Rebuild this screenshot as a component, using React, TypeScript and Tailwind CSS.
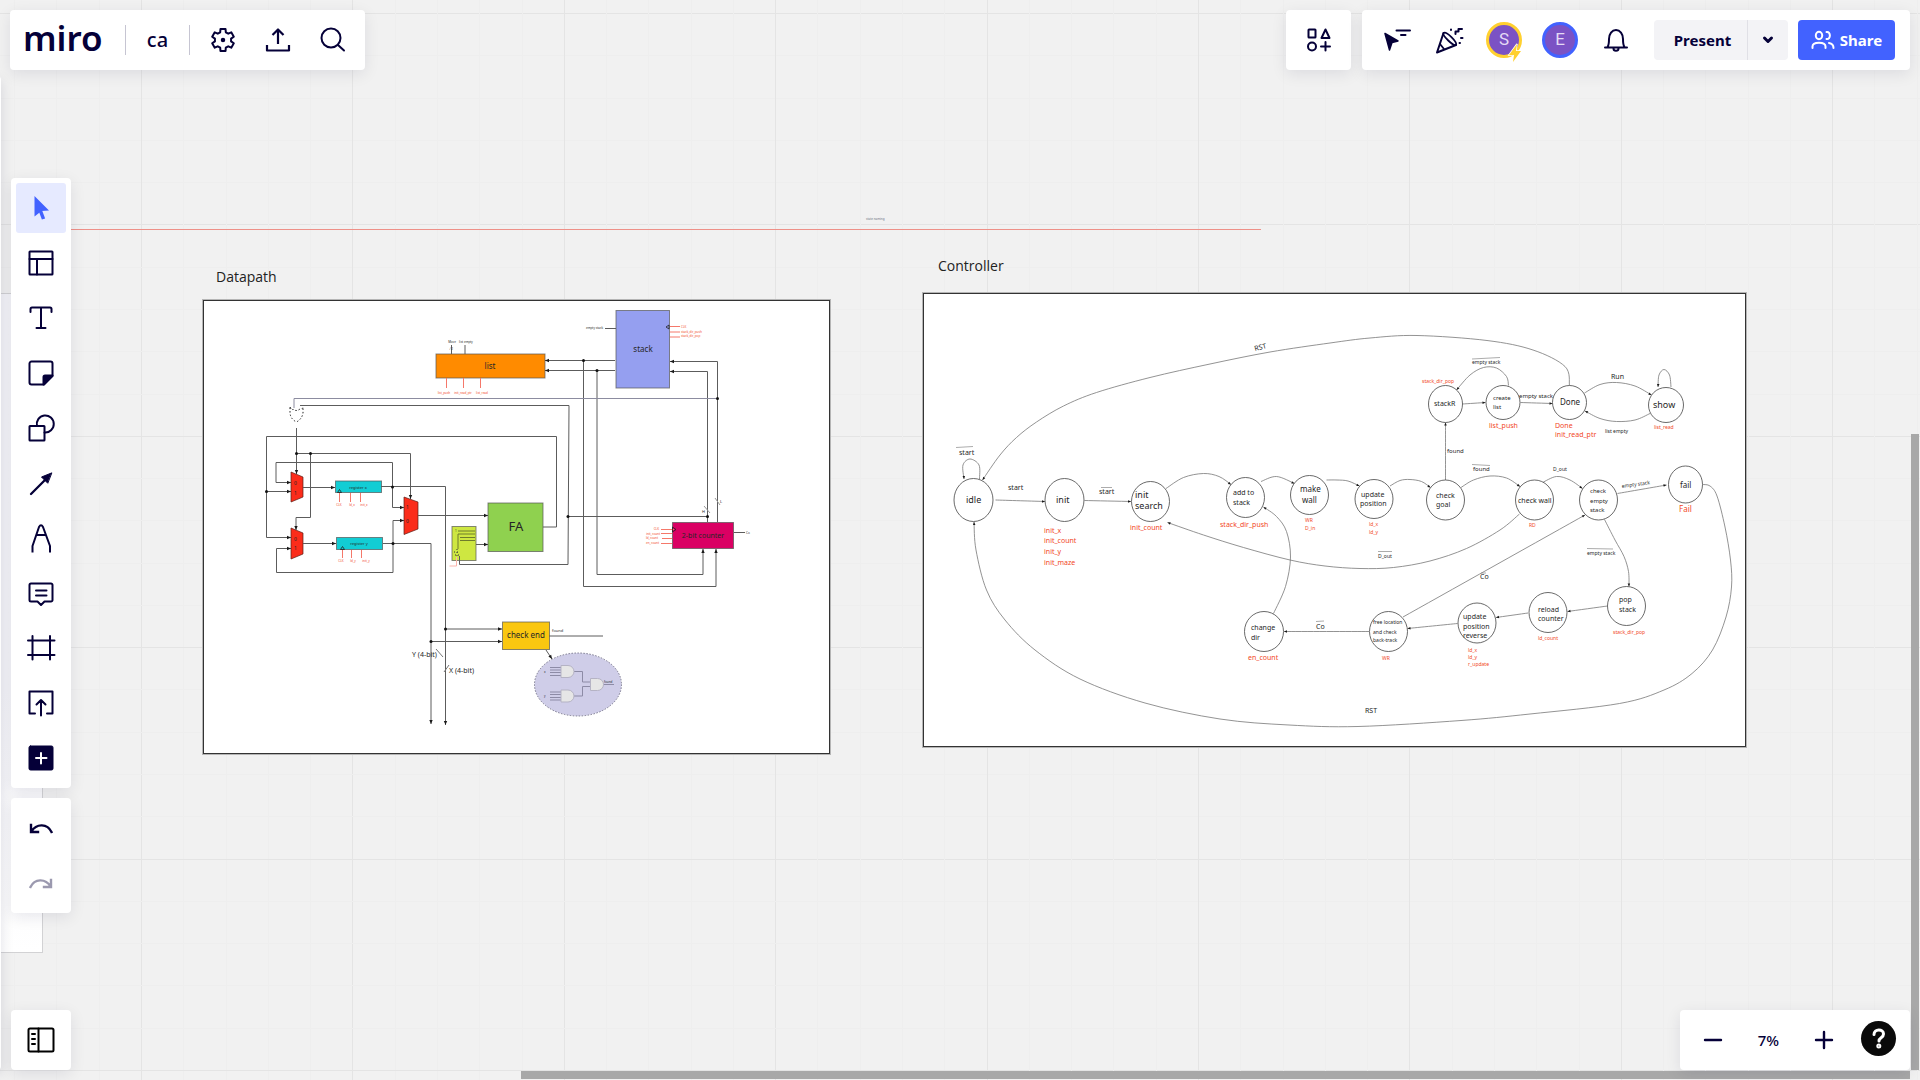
import React from "react";

type Pt = [number, number];

const INK = "#050038";
const RED = "#f24726";

/* ---------- drawing helpers ---------- */

function smooth(pts: Pt[]): string {
  let d = `M${pts[0][0]} ${pts[0][1]}`;
  for (let i = 0; i < pts.length - 1; i++) {
    const a = pts[i - 1] ?? pts[i];
    const b = pts[i];
    const c = pts[i + 1];
    const e = pts[i + 2] ?? c;
    d += ` C${b[0] + (c[0] - a[0]) / 6} ${b[1] + (c[1] - a[1]) / 6} ${c[0] - (e[0] - b[0]) / 6} ${c[1] - (e[1] - b[1]) / 6} ${c[0]} ${c[1]}`;
  }
  return d;
}

function Head({ from, to, size = 4 }: { from: Pt; to: Pt; size?: number }) {
  const angle = (Math.atan2(to[1] - from[1], to[0] - from[0]) * 180) / Math.PI;
  return (
    <path
      d={`M0 0L${-size} ${size / 2.4}V${-size / 2.4}z`}
      fill="#1a1a1a"
      transform={`translate(${to[0]} ${to[1]}) rotate(${angle})`}
    />
  );
}

function Wire({ pts, arrow = false, color = "#5c5c5c" }: { pts: Pt[]; arrow?: boolean; color?: string }) {
  return (
    <>
      <polyline points={pts.map((p) => p.join(",")).join(" ")} fill="none" stroke={color} />
      {arrow && <Head from={pts[pts.length - 2]} to={pts[pts.length - 1]} />}
    </>
  );
}

function Curve({ pts, arrow = true }: { pts: Pt[]; arrow?: boolean }) {
  return (
    <>
      <path d={smooth(pts)} fill="none" stroke="#777" strokeWidth={0.8} />
      {arrow && <Head from={pts[pts.length - 2]} to={pts[pts.length - 1]} size={3} />}
    </>
  );
}

function Label({ x, y, size, children, color = "#262626", anchor = "start", rotate }: {
  x: number; y: number; size: number; children: React.ReactNode; color?: string;
  anchor?: "start" | "middle" | "end"; rotate?: number;
}) {
  return (
    <text x={x} y={y} fontSize={size} fill={color} textAnchor={anchor}
      transform={rotate ? `rotate(${rotate} ${x} ${y})` : undefined}>
      {children}
    </text>
  );
}

/* ---------- canvas grid ---------- */

const STEP = 211.4;

function Grid() {
  const lines = Array.from({ length: 100 }, (_, i) => i);
  return (
    <svg className="absolute inset-0 h-full w-full" aria-hidden="true" shapeRendering="crispEdges">
      {lines.map((i) => {
        const major = i % 5 === 0;
        const x = Math.round(141 - STEP + (i * STEP) / 5);
        const y = Math.round(13 + (i * STEP) / 5);
        return (
          <g key={i} fill={major ? "#e4e4e4" : "#eeeeee"}>
            <rect x={x} y={0} width={1} height="100%" />
            <rect x={0} y={y} width="100%" height={1} />
          </g>
        );
      })}
    </svg>
  );
}

/* ---------- datapath ---------- */

const wires: { pts: Pt[]; arrow?: boolean; color?: string }[] = [
  { pts: [[615, 360.5], [545, 360.5]], arrow: true },
  { pts: [[615, 370.5], [545, 370.5]], arrow: true },
  { pts: [[583.5, 360.5], [583.5, 586.5], [716, 586.5], [716, 549]], arrow: true },
  { pts: [[597, 370.5], [597, 574.5], [703, 574.5], [703, 549]], arrow: true },
  { pts: [[707.5, 522], [707.5, 371.5], [670, 371.5]], arrow: true },
  { pts: [[717.5, 522], [717.5, 361.5], [670, 361.5]], arrow: true },
  { pts: [[717.5, 398.5], [294, 398.5], [294, 408]], color: "#8c8ca0" },
  { pts: [[568, 516.5], [707.5, 516.5]] },
  { pts: [[300, 405.5], [569, 405.5], [568, 564.5], [459.5, 564.5], [459.5, 556]] },
  { pts: [[543, 527], [556.5, 527], [556.5, 436.5], [266.5, 436.5], [266.5, 537.5], [291, 537.5]], arrow: true },
  { pts: [[266.5, 491.5], [291, 491.5]], arrow: true },
  { pts: [[418, 515.5], [488, 515.5]], arrow: true },
  { pts: [[476, 544.5], [488, 544.5]], arrow: true },
  { pts: [[296.5, 428], [296.5, 474]], arrow: true },
  { pts: [[296.5, 453.5], [410.5, 453.5], [410.5, 499]], arrow: true },
  { pts: [[310.5, 453.5], [310.5, 517.5], [296, 517.5], [296, 530]], arrow: true },
  { pts: [[392.5, 487], [392.5, 462.5], [276, 462.5], [276, 482.5], [291, 482.5]], arrow: true },
  { pts: [[303, 487.5], [335, 487.5]], arrow: true },
  { pts: [[381, 486.5], [445.5, 486.5], [445.5, 725]], arrow: true },
  { pts: [[392.5, 487], [392.5, 507.5], [404, 507.5]], arrow: true },
  { pts: [[303, 543.5], [336, 543.5]], arrow: true },
  { pts: [[383, 543.5], [431, 543.5], [431, 724]], arrow: true },
  { pts: [[393, 543.5], [393, 520.5], [404, 520.5]], arrow: true },
  { pts: [[393, 543.5], [393, 572.5], [276.5, 572.5], [276.5, 548.5], [291, 548.5]], arrow: true },
  { pts: [[445.5, 629], [502, 629]], arrow: true },
  { pts: [[431, 641.5], [502, 641.5]], arrow: true },
  { pts: [[549, 636], [603, 636]] },
  { pts: [[546, 650], [552, 659]], arrow: true },
  { pts: [[605, 328.5], [616, 328.5]] },
  { pts: [[734, 532.5], [745, 532.5]] },
  { pts: [[451.5, 345], [451.5, 354]] },
  { pts: [[465, 345], [465, 354]] },
  { pts: [[715, 498], [720, 505]], color: "#999" },
  { pts: [[704, 506], [710, 513]], color: "#999" },
  { pts: [[436, 649], [443, 657]], color: "#777" },
  { pts: [[444, 672], [449, 665]], color: "#777" },
];

const pins: [number, number, number, number][] = [
  [446.5, 378, 446.5, 388], [463.5, 378, 463.5, 388], [480.5, 378, 480.5, 388],
  [339.5, 493, 339.5, 502], [350.5, 493, 350.5, 502], [360.5, 493, 360.5, 502],
  [342.5, 550, 342.5, 558], [351.5, 550, 351.5, 558], [361.5, 550, 361.5, 558],
  [670, 326.5, 680, 326.5], [670, 332, 680, 332], [670, 337, 680, 337],
  [661, 529.5, 674, 529.5], [661, 533.5, 672, 533.5], [662, 538.5, 672, 538.5], [661, 543.5, 672, 543.5],
];

const joints: Pt[] = [
  [583.5, 360.5], [597, 370.5], [717.5, 398.5], [568, 516.5], [707.5, 516.5], [266.5, 491.5],
  [296.5, 453.5], [310.5, 453.5], [392.5, 487], [393, 543.5], [445.5, 629], [431, 641.5],
];

const blocks: [number, number, number, number, string][] = [
  [436, 354, 109, 24, "#ff8b00"],
  [616, 310.5, 53.5, 77.5, "#959ff0"],
  [672.5, 522.5, 61, 26, "#da0063"],
  [488, 503, 55, 48.5, "#8fd14f"],
  [452, 526.5, 24, 34, "#cee741"],
  [335.5, 481, 46, 11.5, "#12cdd4"],
  [336.5, 537.5, 46, 12, "#12cdd4"],
  [502.5, 622, 47, 27.5, "#fac710"],
];

const muxes = [
  "291,472 303,477 303,497 291,502",
  "291,528 303,533 303,554 291,559",
  "404,497 418,502 418,529 404,534.5",
];

const tinyRed: [string, number, number, "start" | "middle" | "end"][] = [
  ["list_push", 444, 394, "middle"], ["init_read_ptr", 463, 394, "middle"], ["list_read", 482, 394, "middle"],
  ["CLK", 339, 506, "middle"], ["ld_x", 352, 506, "middle"], ["init_x", 364, 506, "middle"],
  ["CLK", 341, 562, "middle"], ["ld_y", 353, 562, "middle"], ["init_y", 366, 562, "middle"],
  ["CLK", 681, 328, "start"], ["stack_dir_push", 681, 333, "start"], ["stack_dir_pop", 681, 337, "start"],
  ["CLK", 659, 530, "end"], ["init_count", 660, 535, "end"], ["ld_count", 658, 539, "end"], ["en_count", 659, 544, "end"],
];

function AndGate({ x, y }: { x: number; y: number }) {
  return <path d={`M${x} ${y}h7a6 6 0 0 1 0 12h-7z`} fill="#e6e6e6" stroke="#b5b3c4" />;
}

function Datapath() {
  return (
    <svg viewBox="203 300 627 454" className="block h-full w-full font-['Noto_Sans',sans-serif]" role="img" aria-label="Datapath diagram">
      {blocks.map(([x, y, w, h, fill]) => (
        <rect key={`${x}-${y}`} x={x} y={y} width={w} height={h} fill={fill} stroke="#555" strokeOpacity={0.7} />
      ))}
      {muxes.map((m) => <polygon key={m} points={m} fill="#fb2c1a" stroke="#5a2018" strokeWidth={0.7} />)}
      {wires.map((w, i) => <Wire key={i} {...w} />)}
      {pins.map(([a, b, c, d], i) => <line key={i} x1={a} y1={b} x2={c} y2={d} stroke="#f5786a" />)}
      {joints.map(([x, y]) => <circle key={`${x}-${y}`} cx={x} cy={y} r={1.5} fill="#111" />)}

      <path d="M290 407q2 4 3 2q3 3 7 0q2 1 3-2v6q-1 6-6.500 9q-6-3-6.500-9z" fill="#fff" stroke="#222" strokeDasharray="1.500 2" />
      <path d="M669 325l-3 2 3 2zM672.500 527l3.500 2.500-3.500 2.500zM337.500 492.500l2-3 2 3zM340.500 549.500l2-3 2 3z" fill="none" stroke="#222" strokeWidth={0.8} />
      <path d="M458 531h17M458 549v-15h17M460 537.500h15M460 540.500h15" fill="none" stroke="#6f7c2c" />
      <path d="M454 552h6M455 555h6M457 549v8" fill="none" stroke="#333" strokeDasharray="1 2" />
      <path d="M456.500 557v9h-7" fill="none" stroke="#fbb4ab" />
      <Label x={455} y={532} size={3}>1</Label>
      <Label x={450} y={350} size={3}>⁄ 2</Label>

      <ellipse cx={578} cy={684.5} rx={43.5} ry={31.5} fill="#cfcde8" stroke="#77758c" strokeDasharray="1.500 1.500" />
      <path d="M550 667.500h11M550 670h11M550 672.500h11M550 675.500h11M550 692h11M550 694.500h11M550 697.500h11M550 700h11M574 671.500h8.500v10.500h8M574 696h8.500v-9.500h8M603 684.500h11" fill="none" stroke="#8d8ba6" />
      <AndGate x={561} y={665.5} />
      <AndGate x={561} y={690} />
      <AndGate x={590.5} y={678.5} />
      <Label x={544} y={673} size={3}>x</Label>
      <Label x={544} y={697} size={3}>y</Label>
      <Label x={604} y={683} size={3}>found</Label>

      <Label x={490} y={369} size={8} anchor="middle">list</Label>
      <Label x={643} y={352} size={8} anchor="middle">stack</Label>
      <Label x={703} y={538} size={7} anchor="middle">2-bit counter</Label>
      <Label x={516} y={531} size={13} anchor="middle">FA</Label>
      <Label x={526} y={638} size={8} anchor="middle">check end</Label>
      <Label x={358} y={489} size={4} anchor="middle">register x</Label>
      <Label x={359} y={545} size={4} anchor="middle">register y</Label>
      <Label x={412} y={657} size={7}>Y (4-bit)</Label>
      <Label x={449} y={673} size={7}>X (4-bit)</Label>
      <Label x={552} y={632} size={4}>found</Label>
      <Label x={452} y={343} size={3} anchor="middle">Move</Label>
      <Label x={466} y={343} size={3} anchor="middle">list empty</Label>
      <Label x={586} y={329} size={3}>empty stack</Label>
      <Label x={746} y={534} size={3}>Co</Label>
      <Label x={720} y={503} size={4}>L</Label>
      <Label x={702} y={513} size={4}>H</Label>
      <Label x={294} y={485} size={5}>0</Label>
      <Label x={294} y={495} size={5}>1</Label>
      <Label x={294} y={541} size={5}>0</Label>
      <Label x={294} y={550} size={5}>1</Label>
      <Label x={406} y={509} size={5}>1</Label>
      <Label x={406} y={523} size={5}>0</Label>
      {tinyRed.map(([t, x, y, a], i) => <Label key={i} x={x} y={y} size={3} color={RED} anchor={a}>{t}</Label>)}
    </svg>
  );
}

/* ---------- controller ---------- */

const states: [number, number, number, number][] = [
  [973.5, 500, 19.5, 21.5], [1064.5, 500, 19.5, 21.5], [1150.5, 501.5, 19, 20], [1245.5, 497.5, 19, 20],
  [1309.5, 495, 19, 19.5], [1374, 499, 19, 19.5], [1445.5, 500, 19, 20], [1534.5, 500, 19, 20],
  [1598.5, 500, 19, 20], [1685.5, 484.5, 17, 18.5], [1445.5, 404, 17, 18.5], [1503, 402.5, 17, 17],
  [1569.5, 402.5, 17, 17], [1666, 405, 17.5, 17.5], [1264, 631.5, 19.5, 20], [1388.5, 631.5, 19, 20],
  [1477, 623, 19, 20], [1548, 612.5, 19, 20], [1626.5, 606, 19, 19.5],
];

const curves: Pt[][] = [
  [[979.5, 479], [979, 465], [970, 459], [963, 465], [964, 479]],
  [[1569.5, 385.5], [1565, 366.5], [1533, 350], [1487, 340.5], [1417, 335.5], [1370, 338], [1330, 343], [1270, 352], [1210, 364], [1150, 377.5], [1096.5, 392.5], [1063.5, 406], [1036.5, 422], [1016.5, 437.5], [1000, 455], [982.5, 480]],
  [[1702.5, 484.5], [1710, 486], [1717, 496], [1725, 527], [1730.5, 560], [1731.5, 587], [1726, 617], [1712.5, 650], [1692, 673.5], [1664, 690], [1619.5, 703.5], [1530, 714], [1461, 720.5], [1358, 726.5], [1289, 725], [1220, 719], [1145, 703], [1080, 679], [1035, 650], [1005, 620], [986.5, 590], [976, 550], [974, 522]],
  [[995.5, 500], [1045, 501.5]],
  [[1084.5, 500.5], [1131, 501.5]],
  [[1166, 488.5], [1183.5, 477.5], [1203.5, 473.5], [1219, 476.5], [1231, 484.5]],
  [[1261, 481.5], [1276.5, 476.5], [1294.5, 483.5]],
  [[1326.5, 480], [1337, 480], [1348, 481], [1359.5, 486]],
  [[1390, 486], [1400, 480.5], [1410, 479.5], [1421.5, 481.5], [1430.5, 487.5]],
  [[1461, 487.5], [1473.5, 480], [1490, 476], [1506.5, 478], [1520, 486.5]],
  [[1542.5, 482.5], [1556.5, 476.5], [1570, 480], [1582.5, 488.5]],
  [[1519.5, 514], [1500, 530], [1466.5, 548.5], [1430, 561], [1393.5, 567.5], [1360, 568.5], [1325, 566], [1290, 560], [1243.5, 547.5], [1203.5, 535], [1167.5, 522.5]],
  [[1617.5, 493.5], [1666.5, 485]],
  [[1604.5, 519.5], [1615, 540], [1624, 556.5], [1628.5, 571.5], [1629, 586.5]],
  [[1607.5, 606], [1567.5, 611.5]],
  [[1528, 613], [1496, 617.5]],
  [[1457.5, 623.5], [1407.5, 628.5]],
  [[1369, 631.5], [1284, 631.5]],
  [[1403, 617], [1585, 515]],
  [[1273.5, 613.5], [1285.5, 586.5], [1290.5, 557], [1286.5, 531.5], [1276.5, 516.5], [1263.5, 507]],
  [[1445.5, 480], [1445.5, 422.5]],
  [[1462.5, 404], [1485.5, 402.5]],
  [[1520.5, 402.5], [1552.5, 403.5]],
  [[1508.5, 385.5], [1506.5, 376.5], [1496.5, 368], [1483.5, 367.5], [1470, 375], [1456.5, 390]],
  [[1584.5, 393], [1600, 384.5], [1616.5, 382.5], [1635, 386], [1651.5, 395]],
  [[1650, 413.5], [1635, 420], [1616.5, 421.5], [1600, 418.5], [1585, 411]],
  [[1671, 387], [1669.5, 375], [1664, 369.5], [1659, 375], [1658, 387]],
];

const bars: [number, number, number, number][] = [
  [956, 447.5, 973, 446.5], [1101, 487.5, 1112, 487.5], [1472, 359, 1500, 357.5], [1472, 464.5, 1490, 465.5],
  [1378, 551.5, 1392, 551.5], [1587, 548.5, 1613, 549], [1316, 621.5, 1324, 621], [1481, 573, 1486, 573],
];

const stateText: [string, number, number, number][] = [
  ["idle", 966, 503, 9], ["init", 1056, 503, 9], ["init", 1135, 498, 9], ["search", 1135, 509, 9],
  ["add to", 1233, 495, 7], ["stack", 1233, 505, 7], ["make", 1300, 492, 8], ["wall", 1302, 503, 8],
  ["update", 1361, 497, 7], ["position", 1360, 506, 7], ["check", 1436, 498, 7], ["goal", 1436, 507, 7],
  ["check wall", 1518, 503, 7], ["check", 1590, 493, 6], ["empty", 1590, 503, 6], ["stack", 1590, 512, 6],
  ["fail", 1680, 488, 8], ["stackR", 1434, 406, 7], ["create", 1493, 400, 6], ["list", 1493, 409, 6],
  ["Done", 1560, 405, 8], ["show", 1653, 408, 9], ["change", 1251, 630, 7], ["dir", 1251, 640, 7],
  ["free location", 1373, 624, 5], ["and check", 1373, 634, 5], ["back-track", 1373, 642, 5],
  ["update", 1463, 619, 7], ["position", 1463, 629, 7], ["reverse", 1463, 638, 7],
  ["reload", 1538, 612, 7], ["counter", 1538, 621, 7], ["pop", 1619, 602, 7], ["stack", 1619, 612, 7],
  ["start", 959, 455, 7], ["start", 1008, 490, 7], ["start", 1099, 494, 7], ["empty stack", 1472, 364, 5],
  ["empty stack", 1519, 398, 6], ["Run", 1611, 379, 7], ["list empty", 1605, 433, 5], ["found", 1447, 453, 6],
  ["found", 1473, 471, 6], ["D_out", 1553, 471, 5], ["D_out", 1378, 558, 5], ["empty stack", 1587, 555, 5],
  ["Co", 1480, 579, 7], ["Co", 1316, 629, 7], ["RST", 1365, 713, 7],
];

const outputText: [string, number, number, number][] = [
  ["init_x", 1044, 533, 7], ["init_count", 1044, 543, 7], ["init_y", 1044, 554, 7], ["init_maze", 1044, 565, 7],
  ["init_count", 1130, 530, 7], ["stack_dir_push", 1220, 527, 7], ["WR", 1305, 522, 5], ["D_in", 1305, 530, 5],
  ["ld_x", 1369, 526, 5], ["ld_y", 1369, 534, 5], ["RD", 1529, 527, 5], ["Fail", 1679, 512, 8],
  ["stack_dir_pop", 1422, 383, 5], ["list_push", 1489, 428, 7], ["Done", 1555, 428, 7], ["init_read_ptr", 1555, 437, 7],
  ["list_read", 1654, 429, 5], ["en_count", 1248, 660, 7], ["WR", 1382, 660, 5], ["ld_x", 1468, 652, 5],
  ["ld_y", 1468, 659, 5], ["r_update", 1468, 666, 5], ["ld_count", 1538, 640, 5], ["stack_dir_pop", 1613, 634, 5],
];

function Controller() {
  return (
    <svg viewBox="923 293 823 454" className="block h-full w-full font-['Noto_Sans',sans-serif]" role="img" aria-label="Controller state diagram">
      {curves.map((c, i) => <Curve key={i} pts={c} />)}
      {bars.map(([a, b, c, d], i) => <line key={i} x1={a} y1={b} x2={c} y2={d} stroke="#888" strokeWidth={0.7} />)}
      {states.map(([cx, cy, rx, ry], i) => (
        <ellipse key={i} cx={cx} cy={cy} rx={rx} ry={ry} fill="#fff" stroke="#444" strokeWidth={0.8} />
      ))}
      {stateText.map(([t, x, y, s], i) => <Label key={i} x={x} y={y} size={s}>{t}</Label>)}
      <Label x={1255} y={351} size={7} rotate={-14}>RST</Label>
      <Label x={1622} y={488} size={5} rotate={-8}>empty stack</Label>
      {outputText.map(([t, x, y, s], i) => <Label key={i} x={x} y={y} size={s} color={RED}>{t}</Label>)}
    </svg>
  );
}

/* ---------- chrome ---------- */

function Icon({ children, color = INK, width = 2 }: { children: React.ReactNode; color?: string; width?: number }) {
  return (
    <svg viewBox="0 0 30 30" className="h-[30px] w-[30px] shrink-0 overflow-visible" fill="none" stroke={color}
      strokeWidth={width} strokeLinecap="round" strokeLinejoin="round" aria-hidden="true">
      {children}
    </svg>
  );
}

const panel = "rounded-[4px] bg-white shadow-[0_4px_16px_rgba(5,0,56,0.09)] pointer-events-auto";

const tools: { name: string; icon: React.ReactNode }[] = [
  { name: "Templates", icon: <><rect x="3.500" y="3.500" width="23" height="23" rx="0.500" /><path d="M3.500 11h23M11 11v15.500" /></> },
  { name: "Text", icon: <path d="M4.500 9V6a1.500 1.500 0 0 1 1.500-1.500h18A1.500 1.500 0 0 1 25.500 6v3M15 4.500v20.500M10.500 25h9" /> },
  { name: "Sticky note", icon: <><path d="M5.500 3.500h19a2 2 0 0 1 2 2V18L18 26.500H5.500a2 2 0 0 1-2-2v-19a2 2 0 0 1 2-2z" /><path d="M17.500 26.500V19a1.500 1.500 0 0 1 1.500-1.500h7.500z" fill={INK} /></> },
  { name: "Shapes", icon: <><rect x="3.500" y="13" width="15" height="14.500" rx="0.500" /><path d="M11 13a8.500 8.500 0 1 1 7.500 6.500" /></> },
  { name: "Connection line", icon: <><path d="M5 26L20 11" strokeWidth="2.300" /><path d="M25.500 5L15.500 9l6 6z" fill={INK} strokeWidth="1" /></> },
  { name: "Pen", icon: <path d="M6.500 29.500V23L13 4q2-3.500 4 0l7 19v6.500M10.500 12h9" strokeLinecap="butt" /> },
  { name: "Comment", icon: <path d="M5 5.500h20a1.500 1.500 0 0 1 1.500 1.500v15a1.500 1.500 0 0 1-1.500 1.500h-6.500L15 27l-3.500-3.500H5A1.500 1.500 0 0 1 3.500 22V7A1.500 1.500 0 0 1 5 5.500zM10 12.500h10.500M10 17.500h10.500" /> },
  { name: "Frame", icon: <path d="M6.500 3v23.500M24 3v23.500M2 7.500h26.500M2 22h26.500" /> },
  { name: "Upload", icon: <path d="M9 25.500H3.500v-22h23v22H21M15 27.500V12M10.500 16.500L15 12l4.500 4.500" /> },
  { name: "More apps", icon: <><rect x="3" y="3" width="24" height="24" rx="1.500" fill={INK} stroke={INK} strokeWidth="1" /><path d="M10 15h10.500M15 10v10.500" stroke="#fff" /></> },
];

function gearPath(): string {
  const pts: string[] = [];
  for (let i = 0; i < 6; i++) {
    const at = (deg: number, r: number) => {
      const a = ((i * 60 + deg - 90) * Math.PI) / 180;
      return `${(15 + r * Math.cos(a)).toFixed(2)} ${(15 + r * Math.sin(a)).toFixed(2)}`;
    };
    pts.push(at(-13, 11.3), at(13, 11.3), at(20, 8.2), at(40, 8.2));
  }
  return `M${pts.join("L")}z`;
}

function Avatar({ letter, ring, children }: { letter: string; ring: string; children?: React.ReactNode }) {
  return (
    <button type="button" aria-label={`Collaborator ${letter}`}
      className={`relative flex h-9 w-9 items-center justify-center rounded-full border-[3px] bg-[#7b52c4] font-['Roboto',sans-serif] text-[17px] text-[#e4daf5] ${ring}`}>
      {letter}
      {children}
    </button>
  );
}

export default function App() {
  return (
    <div className="relative h-screen w-full overflow-hidden bg-[#f1f1f1] font-['Noto_Sans',sans-serif] text-[#050038]">
      {/* board */}
      <main className="absolute inset-0">
        <Grid />
        <div className="absolute left-0 top-[293px] h-[660px] w-[43px] border-b border-r border-t border-[#d2d2d4] bg-gradient-to-b from-[#f5f5f9] from-60% to-white" />
        <div className="absolute left-[-20px] top-[76px] h-[994px] w-[21px] rounded bg-white shadow-[0_4px_14px_rgba(5,0,56,0.12)]" />
        <div className="absolute left-[20px] top-[229px] h-px w-[1241px] bg-[#ee9088]" />
        <p className="absolute left-[866px] top-[217px] text-[3px] leading-[5px] text-gray-500">state naming</p>
        <section className="absolute left-[203px] top-[267px]">
          <h2 className="pl-[13px] font-['Open_Sans',sans-serif] text-[14px] leading-[20px] text-[#222]">Datapath</h2>
          <div className="mt-[13px] h-[454px] w-[627px] bg-white outline outline-1 -outline-offset-1 outline-[#333] shadow-[0_0_0_1px_#b5b5b5]">
            <Datapath />
          </div>
        </section>
        <section className="absolute left-[923px] top-[256px]">
          <h2 className="pl-[15px] font-['Open_Sans',sans-serif] text-[14px] leading-[20px] text-[#222]">Controller</h2>
          <div className="mt-[17px] h-[454px] w-[823px] bg-white outline outline-1 -outline-offset-1 outline-[#333] shadow-[0_0_0_1px_#b5b5b5]">
            <Controller />
          </div>
        </section>
        <div className="absolute bottom-[1px] left-[521px] right-[10px] h-2 bg-[#a8a8a8]" />
        <div className="absolute bottom-[10px] right-[1px] top-[434px] w-2 bg-[#a8a8a8]" />
      </main>

      {/* interface */}
      <div className="pointer-events-none absolute inset-0 flex flex-col justify-between p-[10px]">
        <header className="flex h-[60px] shrink-0 justify-between">
          <div className={`flex items-center pl-[13px] pr-[17px] ${panel}`}>
            <a href="#home" className="w-[83px] pb-1 text-[35px] font-semibold leading-[44px]">miro</a>
            <span className="ml-[19px] h-[30px] w-px bg-[#c6c5d2]" />
            <h1 className="w-[63px] text-center text-[20px] font-medium leading-[24px]">ca</h1>
            <span className="h-[30px] w-px bg-[#c6c5d2]" />
            <nav className="ml-[18px] flex gap-[25px]">
              <button type="button" aria-label="Settings">
                <Icon><path d={gearPath()} /><circle cx="15" cy="15" r="1.500" fill={INK} strokeWidth="1.500" /></Icon>
              </button>
              <button type="button" aria-label="Export">
                <Icon width={2.2}><path d="M15 19V5M9.500 10L15 4.500l5.500 5.500M4 20v5.500h22V20" strokeLinecap="butt" /></Icon>
              </button>
              <button type="button" aria-label="Search">
                <Icon><circle cx="13" cy="13" r="9.500" /><path d="M20 20l6 5.500" /></Icon>
              </button>
            </nav>
          </div>

          <div className="flex gap-[11px]">
            <div className={`flex w-[65px] items-center justify-center ${panel}`}>
              <button type="button" aria-label="Apps">
                <Icon>
                  <rect x="4.500" y="4.500" width="7" height="8" rx="0.500" />
                  <path d="M21.500 4.500l4 8.500h-8zM21.500 17v8.500M17 21.500h9" />
                  <circle cx="8" cy="21.500" r="4" />
                </Icon>
              </button>
            </div>
            <div className={`flex items-center pl-5 pr-[15px] ${panel}`}>
              <button type="button" aria-label="Hide cursors" className="mr-[22px]">
                <Icon><path d="M3 8.500L16 16l-6 1.500L7.500 25z" fill={INK} strokeWidth="1.500" /><path d="M14.500 5.500h13.500M19 10h4.500" /></Icon>
              </button>
              <button type="button" aria-label="Reactions" className="mr-[22px]">
                <Icon>
                  <path d="M9.500 8L3 27.500 22 20" />
                  <path d="M9.500 8c3-2 14 9 12.500 12-2.500 1.500-14-9.500-12.500-12zM6 19l4 5" strokeWidth="1.800" />
                  <path d="M17 4.500v.5M21.500 9V6.500h3V4H28M27 13h1.500M25.500 18h.5" />
                </Icon>
              </button>
              <div className="mr-[23px] flex gap-5">
                <Avatar letter="S" ring="border-[#ffd02f]">
                  <svg viewBox="0 0 16 20" className="absolute -bottom-2 -right-1 h-5 w-4" aria-hidden="true">
                    <path d="M10 1L2 12h5l-1 7 8-11H9z" fill="#ffd02f" stroke="#fff" strokeWidth="1.500" paintOrder="stroke" />
                  </svg>
                </Avatar>
                <Avatar letter="E" ring="border-[#4262ff]" />
              </div>
              <button type="button" aria-label="Notifications" className="mr-[23px]">
                <Icon><path d="M4 22.500h22M6.500 22c1.500-2 1.500-4 1.500-8 0-5 3-9 7-9s7 4 7 9c0 4 0 6 1.500 8M12.500 23.500c0 3 5 3 5 0" /></Icon>
              </button>
              <div className="mr-[10px] flex h-10 w-[134px] overflow-hidden rounded-[4px] bg-[#f3f3f6]">
                <button type="button" className="flex-1 border-r border-[#e0e0e6] pl-1 text-[15px] font-bold">Present</button>
                <button type="button" aria-label="Presentation options" className="flex w-10 items-center justify-center">
                  <Icon width={3}><path d="M11.500 13l3.500 3.500 3.500-3.500" /></Icon>
                </button>
              </div>
              <button type="button" className="flex h-10 w-[97px] items-center justify-center gap-[5px] rounded-[4px] bg-[#4262ff] text-[15px] font-bold text-white">
                <svg viewBox="0 0 24 20" className="h-5 w-6" fill="none" stroke="#fff" strokeWidth="2" strokeLinecap="round" aria-hidden="true">
                  <ellipse cx="8" cy="5.500" rx="3.200" ry="3.800" />
                  <path d="M1.500 18v-1.500c0-5 13-5 13 0V18M15.500 2c4.500-1 4.500 8 0 7M18 13c3 .5 4.500 2 4.500 5" />
                </svg>
                Share
              </button>
            </div>
          </div>
        </header>

        <aside className="ml-px flex flex-1 flex-col justify-center gap-[10px] self-start pt-[11px]">
          <div role="toolbar" aria-label="Tools" className={`flex w-[60px] flex-col items-center gap-[5px] py-[5px] ${panel}`}>
            <button type="button" aria-label="Select" className="flex h-[50px] w-[50px] items-center justify-center rounded-[3px] bg-[#e6eaff]">
              <Icon color="#4262ff"><path d="M8.500 3L23 17.500l-7.500.5-7 5.500z" fill="#4262ff" stroke="none" /><path d="M14.500 18l3 8" strokeWidth="3.500" strokeLinecap="butt" /></Icon>
            </button>
            {tools.map((t) => (
              <button key={t.name} type="button" aria-label={t.name} className="flex h-[50px] w-[50px] items-center justify-center">
                <Icon>{t.icon}</Icon>
              </button>
            ))}
          </div>
          <div className={`flex h-[115px] w-[60px] flex-col items-center justify-center gap-[5px] ${panel}`}>
            <button type="button" aria-label="Undo" className="flex h-[50px] w-[50px] items-center justify-center">
              <Icon width={2.4}><path d="M5 12v7h7M5.500 18.500c5-8.500 16-8 20 .5" strokeLinecap="square" strokeLinejoin="miter" /></Icon>
            </button>
            <button type="button" aria-label="Redo" disabled className="flex h-[50px] w-[50px] items-center justify-center">
              <Icon width={2.4} color="#9b99af"><path d="M25 12v7h-7M24.500 18.500c-5-8.500-16-8-20 .5" strokeLinecap="square" strokeLinejoin="miter" /></Icon>
            </button>
          </div>
        </aside>

        <footer className="ml-px flex h-[60px] shrink-0 justify-between">
          <button type="button" aria-label="Frames panel" className={`flex w-[60px] items-center justify-center ${panel}`}>
            <Icon color="#000"><rect x="2.500" y="3.500" width="25" height="23" rx="1.500" /><path d="M12.500 3.500v23M6 9h3M6 14h3M6 19h3" /></Icon>
          </button>
          <div className={`flex w-[230px] items-center justify-between pl-[18px] pr-[14px] ${panel}`}>
            <button type="button" aria-label="Zoom out"><Icon width={2.4}><path d="M7 15h16" /></Icon></button>
            <button type="button" className="w-9 text-center text-[15px] font-medium">7%</button>
            <button type="button" aria-label="Zoom in"><Icon width={2.4}><path d="M7 15h16M15 7v16" /></Icon></button>
            <button type="button" aria-label="Help" className="mb-1 h-[35px] w-[35px] rounded-full bg-[#0a0a0a]">
              <svg viewBox="0 0 35 35" className="h-[35px] w-[35px]" fill="none" stroke="#fff" strokeWidth="3" strokeLinecap="round" aria-hidden="true">
                <path d="M13 13.500c0-6 9.500-6 9.500-.5 0 4-4.500 3.500-4.500 7" />
                <circle cx="17.800" cy="25" r="1" />
              </svg>
            </button>
          </div>
        </footer>
      </div>
    </div>
  );
}
